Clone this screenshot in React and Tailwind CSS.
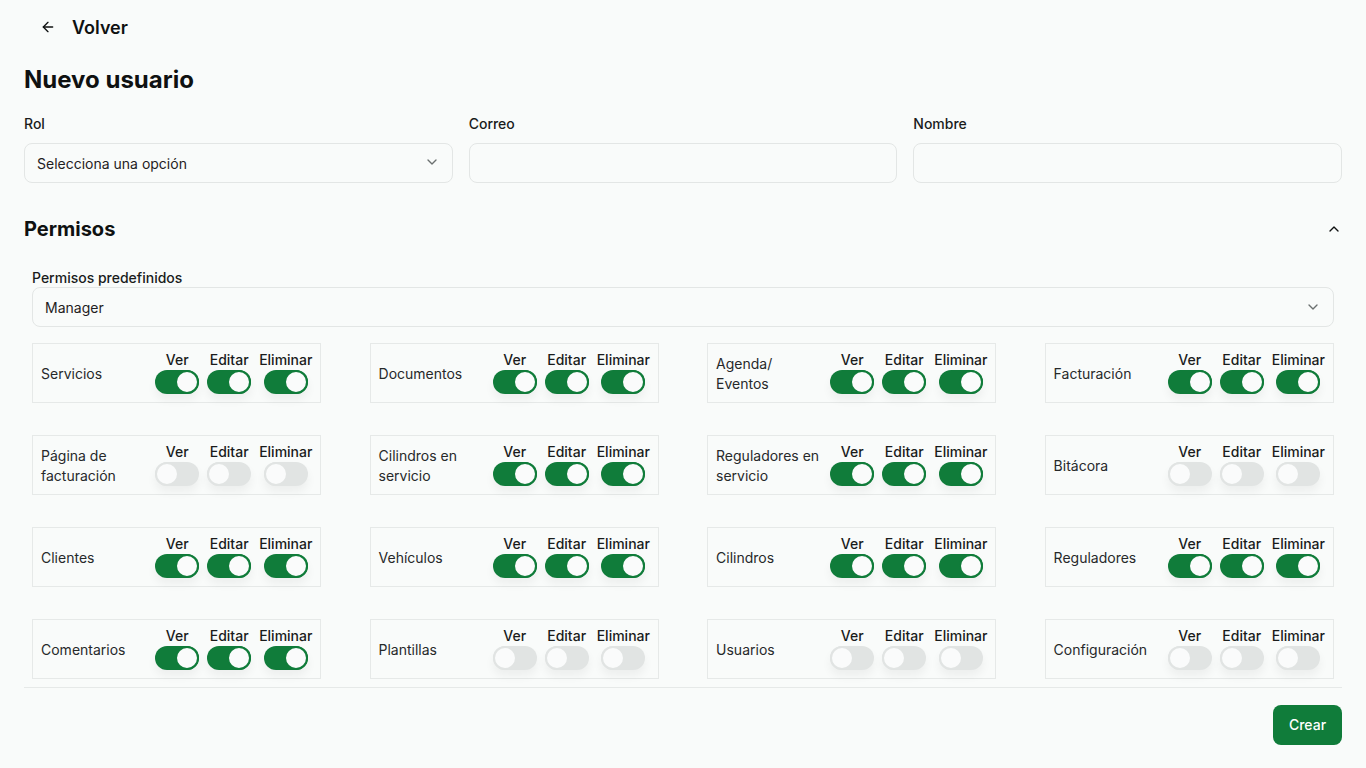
import React from "react";
import { ArrowLeft, ChevronDown, ChevronUp } from "lucide-react";

const permisos = [
  { name: "Servicios", on: true },
  { name: "Documentos", on: true },
  { name: "Agenda/ Eventos", on: true },
  { name: "Facturación", on: true },
  { name: "Página de facturación", on: false },
  { name: "Cilindros en servicio", on: true },
  { name: "Reguladores en servicio", on: true },
  { name: "Bitácora", on: false },
  { name: "Clientes", on: true },
  { name: "Vehículos", on: true },
  { name: "Cilindros", on: true },
  { name: "Reguladores", on: true },
  { name: "Comentarios", on: true },
  { name: "Plantillas", on: false },
  { name: "Usuarios", on: false },
  { name: "Configuración", on: false },
];

const Toggle = ({ on }) => (
  <div
    className={`flex h-6 w-11 rounded-full shadow-[0_6px_10px_rgba(0,0,0,0.05)] ${
      on ? "justify-end bg-[#107c3a]" : "justify-start bg-[#e1e4e3]"
    }`}
  >
    <div
      className={`h-6 w-6 rounded-full border-2 bg-[#fafbfb] ${
        on ? "border-[#107c3a]" : "border-[#e1e4e3]"
      }`}
    />
  </div>
);

const Switch = ({ label, on }) => (
  <div className="flex flex-col items-center">
    <span className="text-sm leading-[20px] font-medium text-[#1a1c1c] whitespace-nowrap">{label}</span>
    <Toggle on={on} />
  </div>
);

const PermisoCard = ({ name, on }) => (
  <div className="flex h-[60px] items-center justify-between border border-[#e6e9e8] px-2">
    <span className="mt-[2px] max-w-[110px] text-sm leading-[20px] text-[#27292a]">{name}</span>
    <div className="mb-[2px] flex gap-2">
      <div className="w-11"><Switch label="Ver" on={on} /></div>
      <div className="w-11"><Switch label="Editar" on={on} /></div>
      <Switch label="Eliminar" on={on} />
    </div>
  </div>
);

const Field = ({ label, children }) => (
  <div>
    <label className="block text-sm leading-[20px] font-medium text-[#1a1c1c]">{label}</label>
    <div className="mt-[9px] flex h-10 items-center justify-between rounded-lg border border-[#e3e6e5] px-3 text-sm text-[#1f2122]">
      {children}
    </div>
  </div>
);

export default function App() {
  return (
    <div className="h-[768px] overflow-hidden bg-[#f9fbfa] px-6 font-['Inter',sans-serif] text-[#0f1111]">
      <div className="flex h-14 items-center pl-4">
        <ArrowLeft size={16} strokeWidth={2} className="mt-[-2px]" />
        <span className="ml-4 text-lg leading-7 font-semibold">Volver</span>
      </div>
      <h1 className="mt-[2px] text-2xl leading-[44px] font-bold">Nuevo usuario</h1>

      <div className="mt-3 grid grid-cols-3 gap-4">
        <Field label="Rol">
          <span className="mt-[2px]">Selecciona una opción</span>
          <ChevronDown size={16} className="mt-[-2px] text-[#6b7070]" />
        </Field>
        <Field label="Correo" />
        <Field label="Nombre" />
      </div>

      <div className="mt-[30px] flex h-8 items-center justify-between">
        <h2 className="text-xl leading-7 font-bold">Permisos</h2>
        <ChevronUp size={16} strokeWidth={2} />
      </div>

      <div className="mt-6 px-2">
        <label className="block text-sm leading-[18px] font-medium text-[#1a1c1c]">Permisos predefinidos</label>
        <div className="flex h-10 items-center justify-between rounded-lg border border-[#e3e6e5] px-3 text-sm text-[#1f2122]">
          <span className="mt-[2px]">Manager</span>
          <ChevronDown size={16} className="text-[#6b7070]" />
        </div>
        <div className="mt-4 grid grid-cols-[repeat(4,289.4px)] justify-between gap-y-8">
          {permisos.map((p) => (
            <PermisoCard key={p.name} name={p.name} on={p.on} />
          ))}
        </div>
      </div>

      <div className="mt-2 border-t border-[#e6e9e8] pt-[17px]">
        <div className="flex justify-end">
          <button className="h-10 w-[69px] rounded-lg bg-[#107c3a] text-sm font-medium text-white">Crear</button>
        </div>
      </div>
    </div>
  );
}
